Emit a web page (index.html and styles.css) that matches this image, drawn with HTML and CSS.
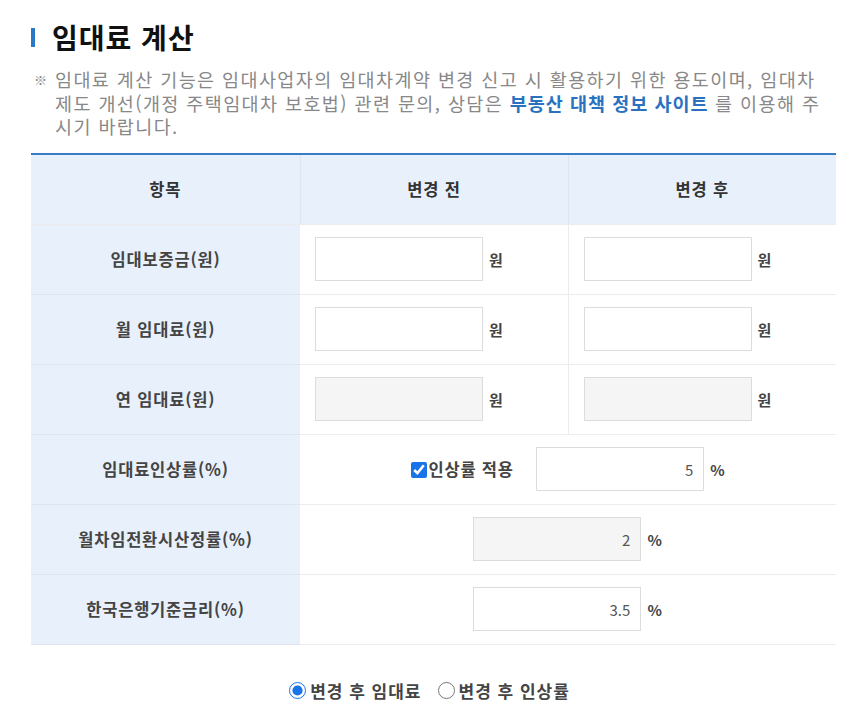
FILE: index.html
```html
<!DOCTYPE html>
<html lang="ko">
<head>
    <meta charset="UTF-8">
    <meta name="viewport" content="width=device-width, initial-scale=1.0">
    <link rel="stylesheet" href="styles.css">
    <title>임대료 계산</title>
</head>
<body>
    <div class="wrap">
        <h2 class="title">임대료 계산</h2>

        <div class="notice">
            <span class="mark">※</span>
            <p>임대료 계산 기능은 임대사업자의 임대차계약 변경 신고 시 활용하기 위한 용도이며, 임대차 제도 개선(개정 주택임대차 보호법) 관련 문의, 상담은 <a href="#">부동산 대책 정보 사이트</a> 를 이용해 주시기 바랍니다.</p>
        </div>

        <table class="calc">
            <colgroup>
                <col class="c1">
                <col class="c2">
                <col class="c3">
            </colgroup>
            <thead>
                <tr>
                    <th>항목</th>
                    <th>변경 전</th>
                    <th>변경 후</th>
                </tr>
            </thead>
            <tbody>
                <tr>
                    <th>임대보증금(원)</th>
                    <td><input type="text" class="num"><span class="unit">원</span></td>
                    <td><input type="text" class="num"><span class="unit">원</span></td>
                </tr>
                <tr>
                    <th>월 임대료(원)</th>
                    <td><input type="text" class="num"><span class="unit">원</span></td>
                    <td><input type="text" class="num"><span class="unit">원</span></td>
                </tr>
                <tr>
                    <th>연 임대료(원)</th>
                    <td><input type="text" class="num" readonly><span class="unit">원</span></td>
                    <td><input type="text" class="num" readonly><span class="unit">원</span></td>
                </tr>
                <tr>
                    <th>임대료인상률(%)</th>
                    <td colspan="2" class="center">
                        <label class="chk"><input type="checkbox" checked>인상률 적용</label>
                        <input type="text" class="num" value="5"><span class="unit">%</span>
                    </td>
                </tr>
                <tr>
                    <th>월차임전환시산정률(%)</th>
                    <td colspan="2" class="center">
                        <input type="text" class="num" value="2" readonly><span class="unit">%</span>
                    </td>
                </tr>
                <tr>
                    <th>한국은행기준금리(%)</th>
                    <td colspan="2" class="center">
                        <input type="text" class="num" value="3.5"><span class="unit">%</span>
                    </td>
                </tr>
            </tbody>
        </table>

        <div class="options">
            <label><input type="radio" name="mode" checked>변경 후 임대료</label>
            <label><input type="radio" name="mode">변경 후 인상률</label>
        </div>
    </div>
</body>
</html>
```

FILE: styles.css
```css
body {
    margin: 0;
    background: #fff;
    font-family: "Noto Sans CJK KR", "Noto Sans", sans-serif;
    color: #333;
}

.wrap {
    width: 805px;
    padding: 17px 30px 0 31px;
}

.title {
    margin: 0;
    padding-left: 21px;
    font-size: 28px;
    font-weight: bold;
    letter-spacing: 1px;
    line-height: 40px;
    color: #111;
    position: relative;
}

.title::before {
    content: "";
    position: absolute;
    left: 0;
    top: 11px;
    width: 4px;
    height: 19px;
    background: #2a78c6;
}

.notice {
    display: flex;
    margin-top: 11px;
    color: #888;
    font-size: 18.5px;
    letter-spacing: 1.4px;
    line-height: 23.5px;
}

.notice .mark {
    width: 24px;
    flex: none;
    font-size: 13px;
    padding-left: 3px;
    box-sizing: border-box;
}

.notice p {
    margin: 0;
    padding-right: 8px;
}

.notice a {
    color: #2a72c0;
    font-weight: bold;
    letter-spacing: 1px;
    text-decoration: none;
}

.calc {
    width: 805px;
    margin-top: 14px;
    border-collapse: collapse;
    table-layout: fixed;
    border-top: 2px solid #3a7cc4;
    font-size: 16.5px;
    letter-spacing: 0.8px;
}

.calc .c1 { width: 269px; }
.calc .c2 { width: 268px; }
.calc .c3 { width: 268px; }

.calc th,
.calc td {
    height: 69px;
    padding: 0;
    border-bottom: 1px solid #ececec;
}

.calc thead th {
    background: #e8f0fb;
    color: #333;
    font-weight: bold;
    border-left: 1px solid #e0e6ee;
}

.calc thead th:first-child {
    border-left: 0;
}

.calc tbody th {
    background: #e8f0fb;
    color: #444;
    font-weight: bold;
    border-bottom-color: #dfe5ee;
}

.calc tbody td {
    padding-left: 15px;
    white-space: nowrap;
}

.calc tbody td + td {
    border-left: 1px solid #ececec;
}

.calc tbody td.center {
    padding-left: 0;
    text-align: center;
}

.num {
    width: 168px;
    height: 44px;
    box-sizing: border-box;
    border: 1px solid #dcdcdc;
    padding: 0 10px;
    text-align: right;
    font-family: "Noto Sans CJK KR", sans-serif;
    font-size: 15px;
    color: #555;
    vertical-align: middle;
    outline: none;
}

.num[readonly] {
    background: #f5f5f5;
}

.unit {
    display: inline-block;
    margin-left: 6px;
    color: #444;
    font-weight: bold;
    font-size: 15px;
    vertical-align: middle;
}

.chk {
    display: inline-flex;
    align-items: center;
    margin-right: 17px;
    color: #444;
    font-weight: bold;
    vertical-align: middle;
}

.chk input {
    width: 16px;
    height: 16px;
    margin: 2px 2px 0 0;
    accent-color: #1a73e8;
}

.options {
    display: flex;
    justify-content: center;
    gap: 16px;
    margin-top: 33px;
    padding-right: 8px;
    font-size: 17px;
    letter-spacing: 1px;
    font-weight: bold;
    color: #444;
}

.options label {
    display: inline-flex;
    align-items: center;
}

.options input {
    width: 17px;
    height: 17px;
    margin: 0 4px 0 0;
    accent-color: #1a73e8;
}
```
